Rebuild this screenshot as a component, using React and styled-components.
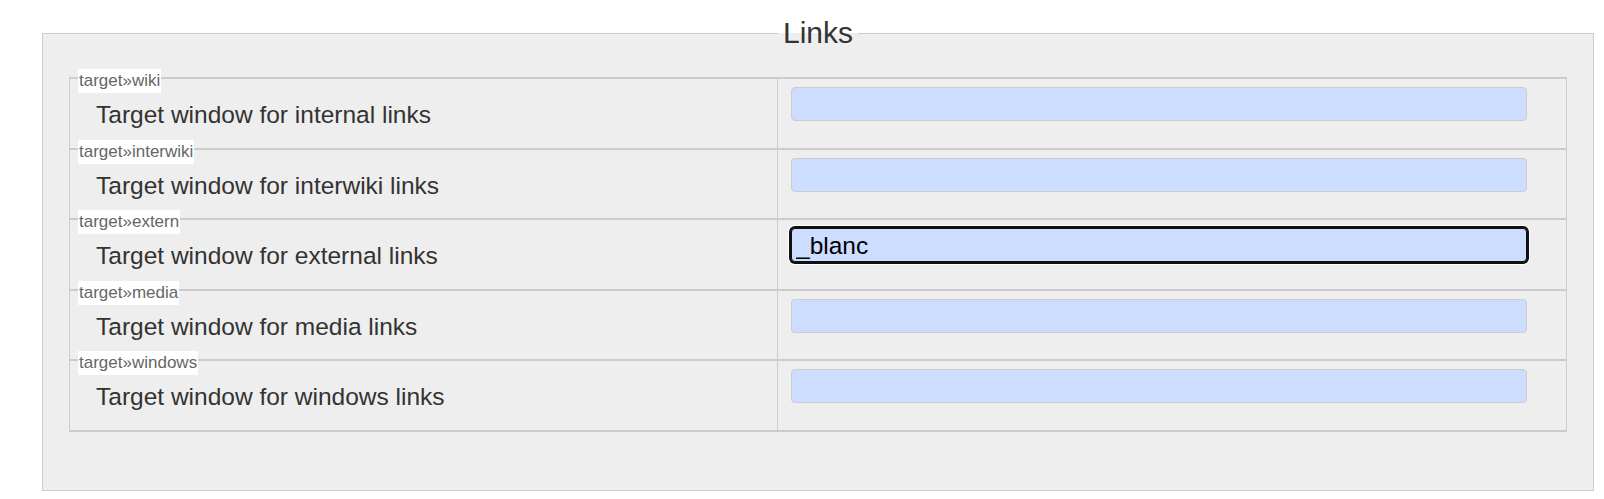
import React from 'react';
import styled, { createGlobalStyle } from 'styled-components';

const GlobalStyle = createGlobalStyle`
  body {
    margin: 0;
    background: #fff;
    font-family: "Liberation Sans", Arial, sans-serif;
    color: #333;
  }
`;

const Page = styled.div`
  padding: 16px 10px 9px 42px;
`;

const Fieldset = styled.fieldset`
  box-sizing: border-box;
  width: 1552px;
  margin: 0;
  padding: 27px 26px 58px 26px;
  border: 1px solid #ccc;
  background: #eee;
  min-width: 0;
`;

const Legend = styled.legend`
  margin: 0 auto;
  padding: 0 5px;
  font-size: 30px;
  line-height: 34px;
  color: #333;
  background: linear-gradient(to bottom, #fff 50%, #eee 50%);
`;

const Table = styled.div`
  border-left: 1px solid #ccc;
  border-right: 1px solid #ccc;
  border-bottom: 2px solid #ccc;
`;

const Row = styled.div`
  box-sizing: border-box;
  height: 70.6px;
  display: grid;
  grid-template-columns: 708px 1fr;
  border-top: 2px solid #ccc;
`;

const LabelCell = styled.div`
  position: relative;
  padding: 22px 0 0 26px;
  border-right: 1px solid #ccc;
`;

const Key = styled.span`
  position: absolute;
  top: -10px;
  left: 8px;
  padding: 0 1px;
  font-size: 17px;
  line-height: 24px;
  color: #666;
  background: #fff;
`;

const Label = styled.label`
  display: block;
  font-size: 24.5px;
  line-height: 28px;
  color: #333;
`;

const ValueCell = styled.div`
  padding: 8px 0 0 13px;
`;

const Input = styled.input`
  box-sizing: border-box;
  display: block;
  width: 736px;
  height: 34px;
  margin: 0;
  padding: 2px 4px 0;
  border: 1px solid ${(p) => (p.$focused ? '#101010' : '#ccc')};
  border-radius: 4px;
  background: #cdf;
  font-family: "Liberation Sans", Arial, sans-serif;
  font-size: 24.5px;
  color: #000;
  outline: none;
  box-shadow: ${(p) => (p.$focused ? '0 0 0 2px #101010, 0 0 0 3px #fff' : 'none')};
`;

const settings = [
  { key: 'wiki', label: 'Target window for internal links', value: '' },
  { key: 'interwiki', label: 'Target window for interwiki links', value: '' },
  { key: 'extern', label: 'Target window for external links', value: '_blanc', focused: true },
  { key: 'media', label: 'Target window for media links', value: '' },
  { key: 'windows', label: 'Target window for windows links', value: '' },
];

const App = () => {
  return (
    <Page>
      <GlobalStyle />
      <Fieldset>
        <Legend>Links</Legend>
        <Table>
          {settings.map((s) => (
            <Row key={s.key}>
              <LabelCell>
                <Key>target»{s.key}</Key>
                <Label htmlFor={`target_${s.key}`}>{s.label}</Label>
              </LabelCell>
              <ValueCell>
                <Input
                  id={`target_${s.key}`}
                  type="text"
                  defaultValue={s.value}
                  $focused={s.focused}
                />
              </ValueCell>
            </Row>
          ))}
        </Table>
      </Fieldset>
    </Page>
  );
};

export default App;
